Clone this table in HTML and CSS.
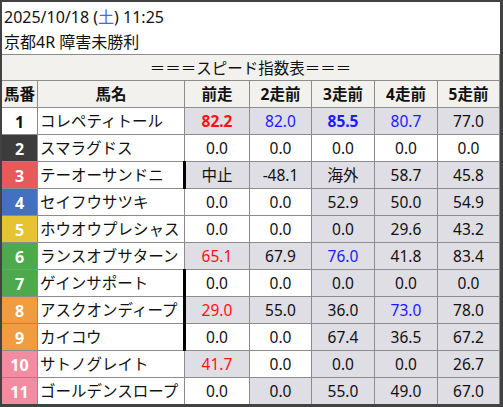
FILE: index.html
```html
<!DOCTYPE html>
<html lang="ja">
<head>
<meta charset="utf-8">
<link rel="stylesheet" href="styles.css">
</head>
<body>
<div class="frame">
  <div class="info">
    <div>2025/10/18 (<span class="sat">土</span>) 11:25</div>
    <div>京都4R 障害未勝利</div>
  </div>
  <div class="sheet">
    <div class="c title">＝＝＝スピード指数表＝＝＝</div>
    <div class="c hd">馬番</div><div class="c hd">馬名</div><div class="c hd">前走</div><div class="c hd">2走前</div><div class="c hd">3走前</div><div class="c hd">4走前</div><div class="c hd">5走前</div>

    <div class="c no w1">1</div><div class="c nm">コレペティトール</div><div class="c g red b">82.2</div><div class="c g blue">82.0</div><div class="c g blue b">85.5</div><div class="c g blue">80.7</div><div class="c g">77.0</div>

    <div class="c no w2">2</div><div class="c nm">スマラグドス</div><div class="c">0.0</div><div class="c">0.0</div><div class="c">0.0</div><div class="c">0.0</div><div class="c">0.0</div>

    <div class="c no w3">3</div><div class="c nm">テーオーサンドニ</div><div class="c g bar">中止</div><div class="c g">-48.1</div><div class="c g">海外</div><div class="c g">58.7</div><div class="c g">45.8</div>

    <div class="c no w4">4</div><div class="c nm">セイフウサツキ</div><div class="c">0.0</div><div class="c">0.0</div><div class="c g">52.9</div><div class="c g">50.0</div><div class="c g">54.9</div>

    <div class="c no w5">5</div><div class="c nm">ホウオウプレシャス</div><div class="c">0.0</div><div class="c">0.0</div><div class="c g">0.0</div><div class="c g">29.6</div><div class="c g">43.2</div>

    <div class="c no w6">6</div><div class="c nm">ランスオブサターン</div><div class="c g red">65.1</div><div class="c g">67.9</div><div class="c g blue">76.0</div><div class="c g">41.8</div><div class="c g">83.4</div>

    <div class="c no w6">7</div><div class="c nm">ゲインサポート</div><div class="c bar">0.0</div><div class="c">0.0</div><div class="c g">0.0</div><div class="c g">0.0</div><div class="c g">0.0</div>

    <div class="c no w7">8</div><div class="c nm">アスクオンディープ</div><div class="c g red bar">29.0</div><div class="c g">55.0</div><div class="c g">36.0</div><div class="c g blue">73.0</div><div class="c g">78.0</div>

    <div class="c no w7">9</div><div class="c nm">カイコウ</div><div class="c bar">0.0</div><div class="c">0.0</div><div class="c g">67.4</div><div class="c g">36.5</div><div class="c g">67.2</div>

    <div class="c no w8">10</div><div class="c nm">サトノグレイト</div><div class="c g red">41.7</div><div class="c">0.0</div><div class="c g">0.0</div><div class="c g">0.0</div><div class="c g">26.7</div>

    <div class="c no w8">11</div><div class="c nm">ゴールデンスロープ</div><div class="c">0.0</div><div class="c g">0.0</div><div class="c g">55.0</div><div class="c g">49.0</div><div class="c g">67.0</div>
  </div>
</div>
</body>
</html>
```

FILE: styles.css
```css
* { box-sizing: border-box; }
html, body { margin: 0; padding: 0; background: #fff; }
body {
  font-family: "Noto Sans", "Noto Sans CJK JP", sans-serif;
  color: #111;
}
.frame {
  width: 503px;
  height: 407px;
  border-style: solid;
  border-color: #424242;
  border-width: 2px 3px 3px 2px;
  background: #fff;
  overflow: hidden;
}
.info {
  height: 52px;
  padding: 3px 2px 0;
  font-size: 16px;
  line-height: 25px;
  white-space: nowrap;
}
.sat { color: #4a6cc8; }
.sheet {
  display: grid;
  grid-template-columns: 35px 146px 64px 61px 62px 62px 61px;
  grid-template-rows: 25px 26px;
  grid-auto-rows: 26px;
  gap: 1px;
  padding: 1px 1px 0 0;
  background: #8c8c8c;
  font-size: 15.5px;
}
.c {
  display: flex;
  align-items: center;
  justify-content: center;
  padding-top: 2px;
  background: #fff;
  white-space: nowrap;
  line-height: 1;
  position: relative;
}
.title {
  grid-column: 1 / -1;
  background: #f2f1ed;
}
.hd {
  background: #f2f1ed;
  font-weight: bold;
}
.nm {
  justify-content: flex-start;
  padding-left: 2px;
}
.g { background: #dedee4; }
.red { color: #ff1010; }
.blue { color: #1a1aff; }
.b { font-weight: bold; }
.bar::before {
  content: "";
  position: absolute;
  left: -2px;
  top: -1px;
  bottom: -1px;
  width: 3px;
  background: #000;
}
.no { font-weight: bold; color: #fff; font-size: 16px; }
.w1 { background: #fff; color: #111; }
.w2 { background: #3c3c3c; }
.w3 { background: #e65a5a; }
.w4 { background: #4470c0; }
.w5 { background: #e6c330; }
.w6 { background: #4caa4c; }
.w7 { background: #f09c40; }
.w8 { background: #f28ca0; }
```
